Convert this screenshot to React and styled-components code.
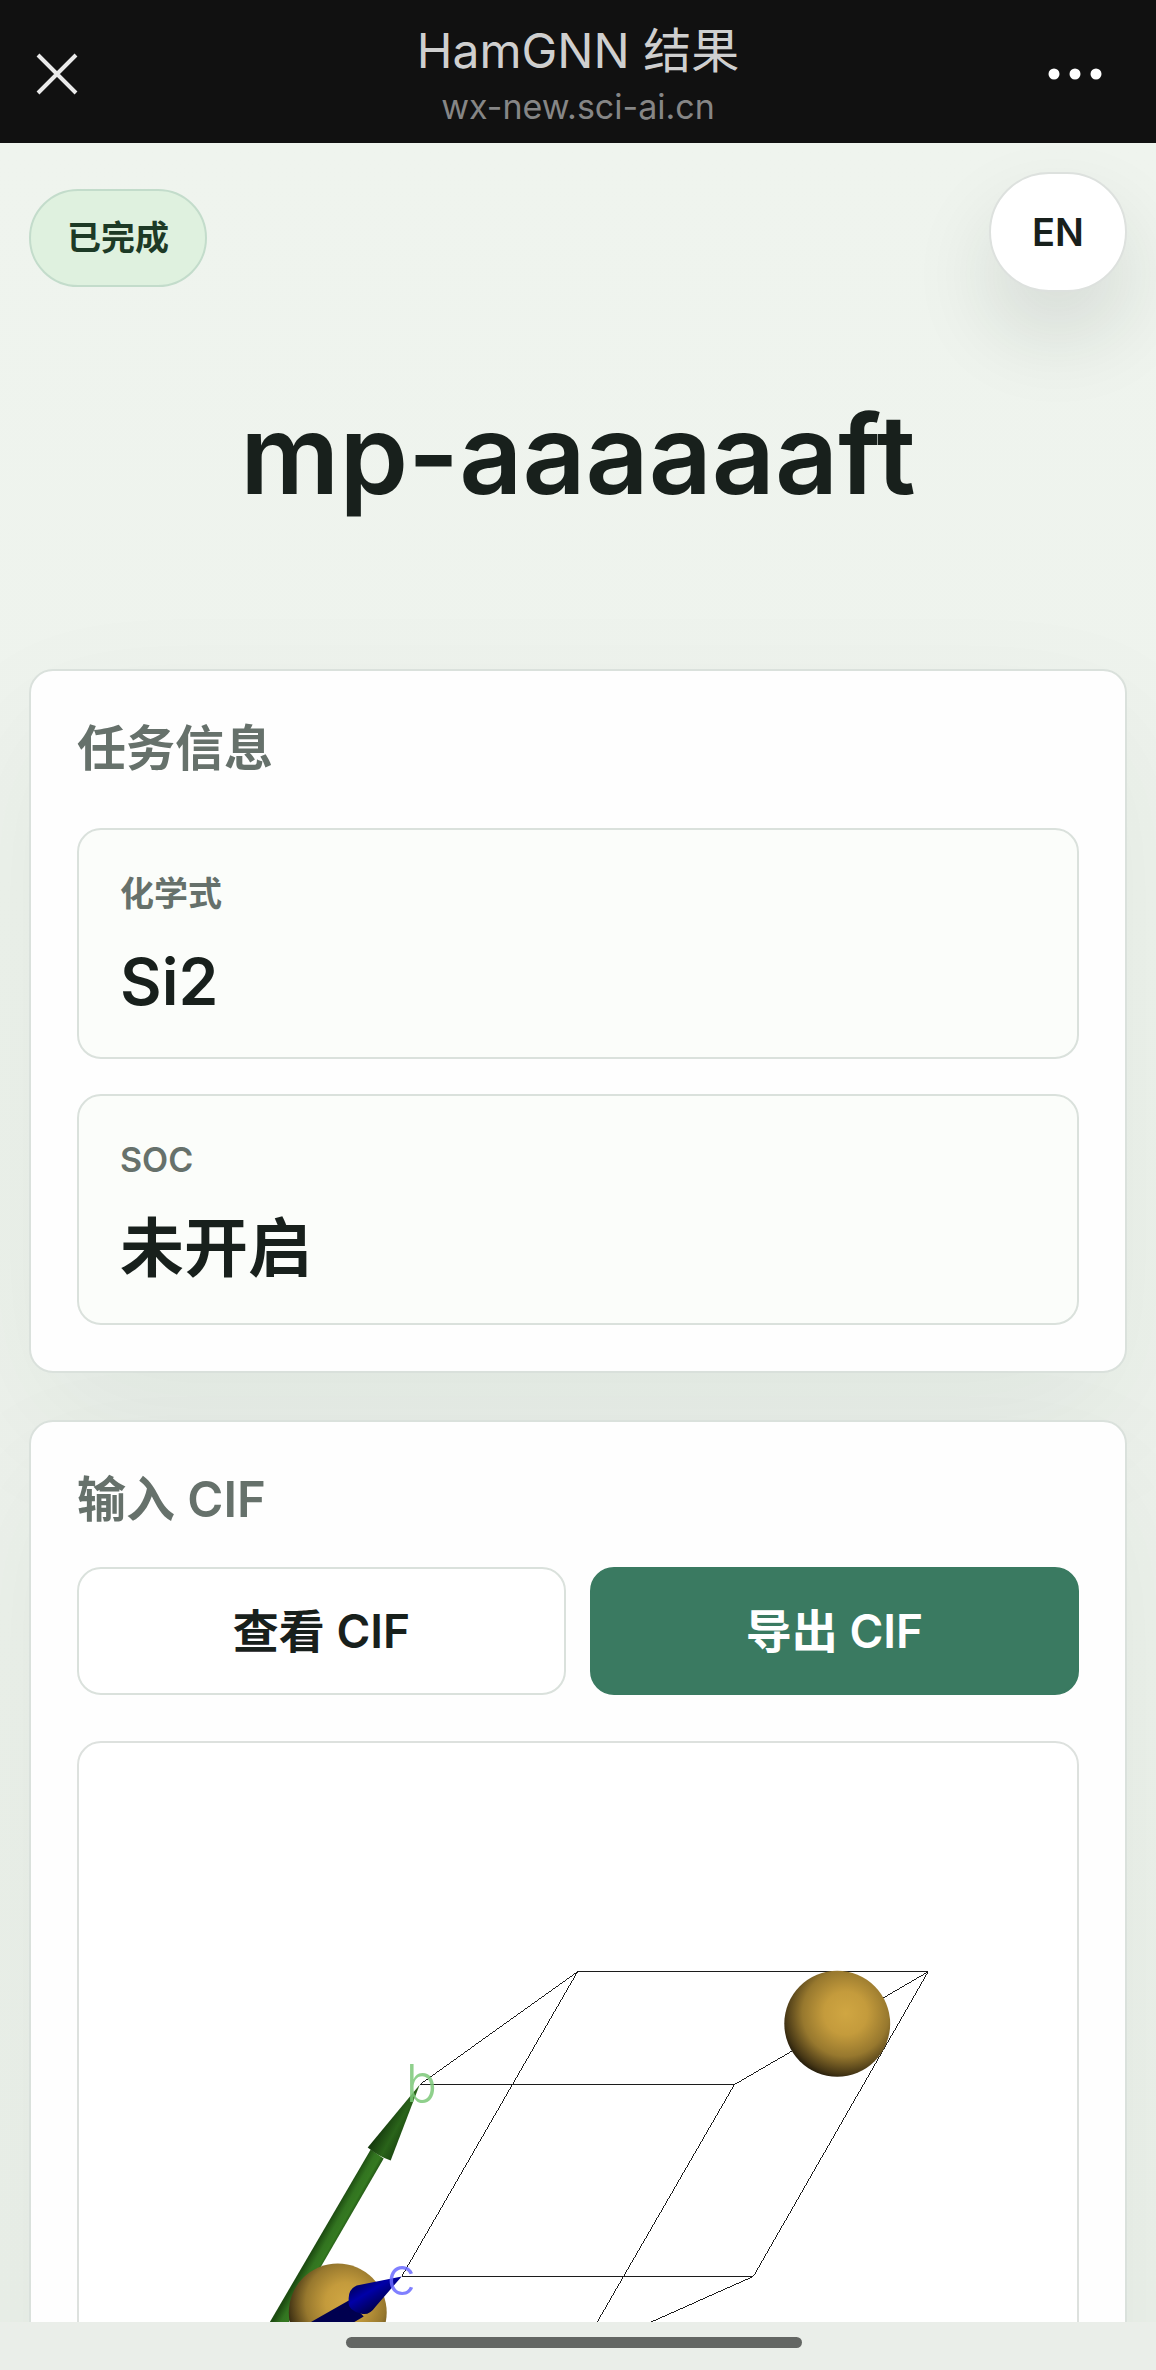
import styled, { createGlobalStyle } from "styled-components";

const info = [
  { label: "化学式", value: "Si2" },
  { label: "SOC", value: "未开启" },
];

const CloseIcon = () => (
  <svg width="42" height="42" viewBox="0 0 42 42" aria-hidden="true">
    <path d="M2 2L40 40M40 2L2 40" stroke="#eaeaea" strokeWidth="4" />
  </svg>
);

const MoreIcon = () => (
  <svg width="54" height="12" viewBox="0 0 54 12" fill="#fff" aria-hidden="true">
    <circle cx="6" cy="6" r="5.5" />
    <circle cx="27" cy="6" r="5.5" />
    <circle cx="48" cy="6" r="5.5" />
  </svg>
);

const CrystalView = () => (
  <Crystal viewBox="0 0 999 800" role="img" aria-label="Si2">
    <defs>
      <radialGradient id="atom" cx="0.58" cy="0.4" r="0.68">
        <stop offset="0" stopColor="#d0a642" />
        <stop offset="0.3" stopColor="#c49b3c" />
        <stop offset="0.6" stopColor="#97782e" />
        <stop offset="0.85" stopColor="#453615" />
        <stop offset="1" stopColor="#050401" />
      </radialGradient>
      <linearGradient
        id="shaftB"
        gradientUnits="userSpaceOnUse"
        x1="244"
        y1="490"
        x2="260"
        y2="499"
      >
        <stop offset="0" stopColor="#1d4c11" />
        <stop offset="0.4" stopColor="#327420" />
        <stop offset="0.7" stopColor="#357a21" />
        <stop offset="1" stopColor="#1d4c11" />
      </linearGradient>
      <linearGradient
        id="coneB"
        gradientUnits="userSpaceOnUse"
        x1="293"
        y1="396"
        x2="322"
        y2="412"
      >
        <stop offset="0" stopColor="#12330b" />
        <stop offset="0.5" stopColor="#2a641a" />
        <stop offset="1" stopColor="#153a0d" />
      </linearGradient>
      <linearGradient
        id="coneC"
        gradientUnits="userSpaceOnUse"
        x1="272"
        y1="542"
        x2="290"
        y2="572"
      >
        <stop offset="0" stopColor="#000052" />
        <stop offset="0.45" stopColor="#0000a8" />
        <stop offset="1" stopColor="#00004a" />
      </linearGradient>
    </defs>

    {/* unit cell */}
    <g
      fill="none"
      stroke="#1c1c1c"
      strokeWidth="1"
      shapeRendering="crispEdges"
    >
      <path d="M341 342L499 229H850L656 342Z" />
      <path d="M499 229L323 534H675L850 229" />
      <path d="M656 342L500 612L675 534" />
    </g>

    <circle cx="759" cy="281" r="53" fill="url(#atom)" />

    {/* b axis */}
    <path d="M292 407L305 416L146 690L130 684Z" fill="url(#shaftB)" />
    <path d="M341 342L289 405Q300 414 312 418Z" fill="url(#coneB)" />

    <circle cx="259" cy="570" r="49" fill="url(#atom)" />

    {/* c axis */}
    <path d="M270 558L228 582L149 612L228 608L285 574Z" fill="#00004f" />
    <path
      d="M323 534L278 543Q269 547 270 558Q268 568 282 571Q290 574 297 564Z"
      fill="url(#coneC)"
    />

    <AxisLabel x="327" y="359" fill="#7cc878">
      b
    </AxisLabel>
    <AxisLabel x="308" y="553" fill="#6a6aff">
      c
    </AxisLabel>
  </Crystal>
);

export default function App() {
  return (
    <Shell>
      <GlobalStyle />
      <TopBar>
        <IconButton type="button" aria-label="关闭">
          <CloseIcon />
        </IconButton>
        <TopTitle>
          <PageName>HamGNN 结果</PageName>
          <PageHost>wx-new.sci-ai.cn</PageHost>
        </TopTitle>
        <IconButton type="button" aria-label="更多" $end>
          <MoreIcon />
        </IconButton>
      </TopBar>

      <Content>
        <StatusRow>
          <Badge>已完成</Badge>
          <LangButton type="button">EN</LangButton>
        </StatusRow>
        <Title>mp-aaaaaaft</Title>

        <Card>
          <CardTitle>任务信息</CardTitle>
          <InfoList>
            {info.map((item) => (
              <InfoBox key={item.label}>
                <dt>{item.label}</dt>
                <dd>{item.value}</dd>
              </InfoBox>
            ))}
          </InfoList>
        </Card>

        <Card>
          <CardTitle>输入 CIF</CardTitle>
          <Actions>
            <Button type="button">查看 CIF</Button>
            <Button type="button" $primary>
              导出 CIF
            </Button>
          </Actions>
          <Viewer>
            <CrystalView />
          </Viewer>
        </Card>
      </Content>

      <HomeBar>
        <HomeIndicator />
      </HomeBar>
    </Shell>
  );
}

const GlobalStyle = createGlobalStyle`
  * {
    box-sizing: border-box;
  }

  body {
    margin: 0;
    background: #eaefe9;
    color: #18201c;
    font-family: Inter, "Noto Sans CJK SC", sans-serif;
  }

  button {
    font-family: inherit;
    cursor: pointer;
  }

  h1, h2, p, dl, dd {
    margin: 0;
  }
`;

const Shell = styled.div`
  height: 100vh;
  display: flex;
  flex-direction: column;
`;

const TopBar = styled.header`
  flex: none;
  height: 143px;
  padding: 4px 54px 0 36px;
  display: flex;
  align-items: center;
  justify-content: space-between;
  background: #111;
`;

const IconButton = styled.button`
  width: 80px;
  height: 80px;
  padding: 0;
  border: 0;
  background: none;
  display: flex;
  align-items: center;
  justify-content: ${({ $end }) => ($end ? "flex-end" : "flex-start")};
`;

const TopTitle = styled.div`
  flex: 1;
  padding: 2px 0 0 18px;
  text-align: center;
`;

const PageName = styled.p`
  color: #cfcfcf;
  font-size: 48px;
  line-height: 64px;
`;

const PageHost = styled.p`
  color: #868686;
  font-size: 34px;
  line-height: 48px;
`;

const Content = styled.main`
  flex: 1;
  min-height: 0;
  overflow: hidden;
  padding: 29px 29px 0;
  background: linear-gradient(#eff4ee, #ecf1eb);
`;

const StatusRow = styled.div`
  display: flex;
  align-items: center;
  justify-content: space-between;
`;

const Badge = styled.span`
  padding: 0 36px;
  margin-top: 12px;
  border: 2px solid #c3dccb;
  border-radius: 999px;
  background: #dff1df;
  color: #1d3a26;
  font-size: 34px;
  font-weight: 600;
  line-height: 94px;
`;

const LangButton = styled.button`
  width: 138px;
  height: 120px;
  border: 2px solid #dde1de;
  border-radius: 60px;
  background: #fff;
  box-shadow: 0 42px 84px rgba(24, 45, 34, 0.12);
  color: #18201c;
  font-size: 38px;
  font-weight: 600;
`;

const Title = styled.h1`
  padding: 84px 0 96px;
  font-size: 110px;
  font-weight: 600;
  line-height: 156px;
  text-align: center;
  margin-bottom: 41px;
`;

const Card = styled.section`
  padding: 46px;
  margin-bottom: 47px;
  border: 2px solid #dae1dc;
  border-radius: 24px;
  background: #fefefe;
  box-shadow: 0 54px 144px rgba(24, 45, 34, 0.06);
`;

const CardTitle = styled.h2`
  color: #66716b;
  font-size: 49px;
  font-weight: 600;
  line-height: 64px;
`;

const InfoList = styled.dl`
  display: grid;
  gap: 35px;
  margin-top: 47px;
`;

const InfoBox = styled.div`
  padding: 37px 41px 31px;
  border: 2px solid #dae1dc;
  border-radius: 24px;
  background: #fbfdfa;

  dt {
    color: #66716b;
    font-size: 34px;
    font-weight: 600;
    line-height: 53px;
  }

  dd {
    padding-top: 18px;
    font-size: 64px;
    font-weight: 600;
    line-height: 88px;
  }
`;

const Actions = styled.div`
  display: grid;
  grid-template-columns: 1fr 1fr;
  gap: 24px;
  margin: 35px 0 46px;
`;

const Button = styled.button`
  height: 128px;
  padding: 0 0 6px;
  border: 2px solid ${({ $primary }) => ($primary ? "#3a7a61" : "#dae1dc")};
  border-radius: 24px;
  background: ${({ $primary }) => ($primary ? "#3a7a61" : "#fff")};
  color: ${({ $primary }) => ($primary ? "#fff" : "#18201c")};
  font-size: 46px;
  font-weight: 600;
`;

const Viewer = styled.div`
  border: 2px solid #dde1de;
  border-radius: 24px;
  background: #fff;
  overflow: hidden;
`;

const Crystal = styled.svg`
  display: block;
  width: 100%;
`;

const AxisLabel = styled.text`
  font-family: Inter, sans-serif;
  font-size: 52px;
  font-weight: 300;
  opacity: 0.85;
`;

const HomeBar = styled.footer`
  flex: none;
  height: 48px;
  padding: 15px 0 0;
  display: flex;
  justify-content: center;
  background: #eaeee9;
`;

const HomeIndicator = styled.div`
  width: 456px;
  height: 11px;
  margin-right: 8px;
  border-radius: 6px;
  background: #636663;
`;
